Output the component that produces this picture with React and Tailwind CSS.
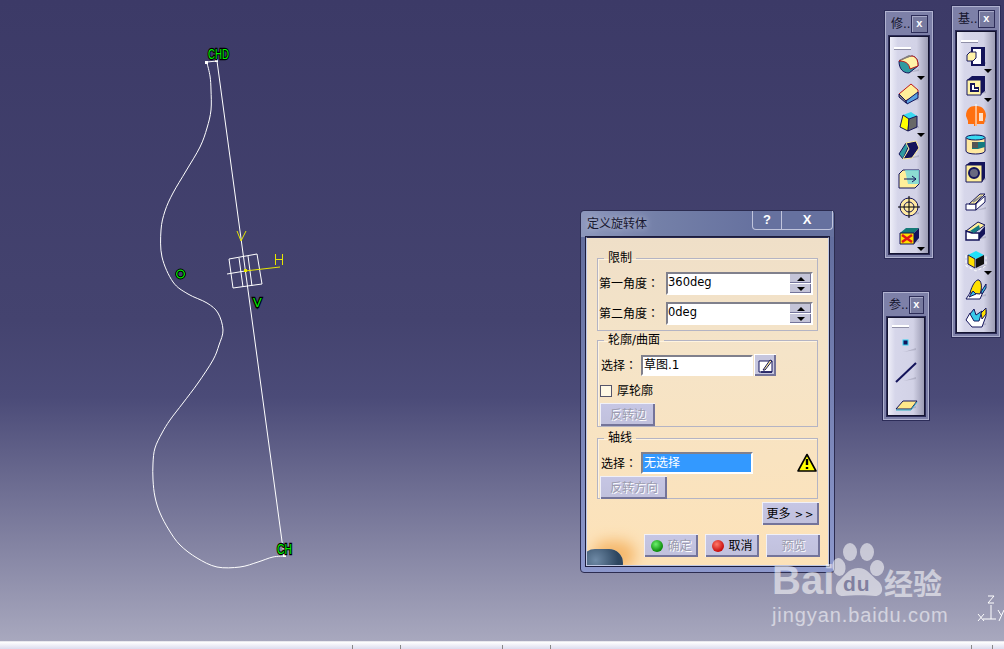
import React from "react";

const CJK = "font-['DejaVu_Sans','Noto_Sans_CJK_SC',sans-serif]";

// sketch profile, read off the picture
const profile = [
  [207, 63], [210, 76], [211, 90], [211, 110], [207, 128], [200, 147], [186, 171], [173, 193], [165, 211],
  [161, 230], [162, 257], [173, 282], [188, 294], [207, 303], [218, 313], [223, 330], [219, 345], [213, 360],
  [198, 383], [183, 403], [170, 420], [162, 433], [155, 448], [153, 463], [153, 480], [155, 497], [160, 513], [169, 530],
  [180, 545], [197, 558], [217, 567], [240, 567], [258, 562], [273, 557], [286, 556],
];

function smooth(pts) {
  let d = `M${pts[0][0]} ${pts[0][1]}`;
  for (let i = 0; i < pts.length - 1; i++) {
    const p0 = pts[i - 1] || pts[i];
    const p1 = pts[i];
    const p2 = pts[i + 1];
    const p3 = pts[i + 2] || p2;
    d += ` C${p1[0] + (p2[0] - p0[0]) / 6} ${p1[1] + (p2[1] - p0[1]) / 6} ${p2[0] - (p3[0] - p1[0]) / 6} ${p2[1] - (p3[1] - p1[1]) / 6} ${p2[0]} ${p2[1]}`;
  }
  return d;
}

function Sketch() {
  const tag = { fill: "#00f000", stroke: "#000", strokeWidth: 2.400, paintOrder: "stroke", fontFamily: "Liberation Sans", fontSize: 14 };
  return (
    <svg width="1004" height="641" className="absolute left-0 top-0">
      <g fill="none" stroke="#fff" strokeWidth="1">
        <path d={smooth(profile)} />
        <path d="M207 62L217 61L284 556" />
        <path d="M229 259L257 254L262 284L233 288Z" />
        <path d="M239 258L243 287M248 256L252 286" />
        <path d="M227 274L245 271" />
      </g>
      <rect x="205" y="61" width="3" height="3" fill="#fff" />
      <rect x="215" y="59" width="3" height="3" fill="#fff" />
      <rect x="283" y="554" width="3" height="3" fill="#fff" />
      <g stroke="#e6e600" fill="none" strokeWidth="1">
        <path d="M245 271L280 267M237 231L241 241L246 231" />
        <path d="M275.500 254V265M282.500 254V265M275 259.500H283" />
      </g>
      <rect x="244" y="269" width="3" height="3" fill="#e6e600" />
      <circle cx="180.500" cy="274" r="3.800" fill="none" stroke="#000" strokeWidth="3.200" />
      <circle cx="180.500" cy="274" r="3.800" fill="none" stroke="#00e800" strokeWidth="1.300" />
      <text x="208" y="59" textLength="21" lengthAdjust="spacingAndGlyphs" style={tag}>CHD</text>
      <text x="253" y="307" style={{ ...tag, fontSize: 13 }}>V</text>
      <text x="277" y="553.500" textLength="15" lengthAdjust="spacingAndGlyphs" style={tag}>CH</text>
      <g fill="none" stroke="#fff" strokeWidth="1">
        <path d="M991 605V619H983M991 619H996" />
        <path d="M978 614L984 621M984 614L978 621" />
        <path d="M988 596H994L988 603H994" />
        <path d="M998 610L1001 615M1004 610L999 621" />
      </g>
    </svg>
  );
}

function Watermark() {
  return (
    <div className="absolute left-[772px] top-[542px] h-[90px] w-[190px] text-white/55">
      <svg width="190" height="60" viewBox="0 0 190 60" className="absolute left-0 top-0" fill="currentColor">
        <ellipse cx="67" cy="25" rx="6.500" ry="9" transform="rotate(-10 67 25)" />
        <ellipse cx="78" cy="10" rx="7" ry="9" />
        <ellipse cx="95" cy="10" rx="7" ry="9" />
        <ellipse cx="105" cy="26" rx="7" ry="8" transform="rotate(15 105 26)" />
        <path d="M86 26C76 26 72 35 68 38C62 43 62 54 71 54C80 53 96 53 103 54C112 54 112 44 106 39C99 34 96 26 86 26Z" />
      </svg>
      <span className="absolute left-0 top-[14px] font-['Liberation_Sans',sans-serif] text-[40px] leading-[48px] font-bold">Bai</span>
      <span className="absolute left-[71px] top-[29px] font-['Liberation_Sans',sans-serif] text-[21px] leading-[26px] tracking-[1px] font-bold text-[#8080a0]">du</span>
      <span className="absolute left-[112px] top-[22px] font-['Noto_Sans_CJK_SC',sans-serif] text-[29px] leading-[36px] font-bold">经验</span>
      <span className="absolute left-0 top-[60px] font-['Liberation_Sans',sans-serif] text-[20px] leading-[26px] tracking-[0.9px]">jingyan.baidu.com</span>
    </div>
  );
}

// toolbar icons
const Dots = () => <path d="M9 21L22 19L22 17L13 20Z" fill="#9a9ab0" opacity=".55" />;
const stroke = { stroke: "#14145a", strokeWidth: 1, strokeLinejoin: "round" };

const icons = {
  fillet: (
    <>
      <path d="M2 9L15 4C20 5 21 9 21 14L12 21C6 21 2 17 2 9Z" fill="#2f9aa0" {...stroke} />
      <path d="M2 9L10 5L15 4C20 5 21 9 21 14L13 17C12 11 8 9 2 9Z" fill="#fff3a8" stroke="#c01818" />
      <path d="M2 8L12 3L15 4L5 8Z" fill="#808080" />
    </>
  ),
  chamfer: (
    <>
      <path d="M2 13L8 20L21 14V9L14 3Z" fill="#ffef9a" stroke="#c01818" />
      <path d="M2 13L9 20V22L2 16Z" fill="#808080" {...stroke} />
      <path d="M9 20L21 11V17L10 23Z" fill="#5aa0e0" {...stroke} />
    </>
  ),
  draft: (
    <>
      <path d="M6 6L14 3L20 7L12 10Z" fill="#38d8f0" />
      <path d="M6 6L12 10L11 22L3 18Z" fill="#ffff00" {...stroke} />
      <path d="M12 10L20 7V18L11 22Z" fill="#686868" {...stroke} />
    </>
  ),
  chevron: (
    <>
      <path d="M2 16L9 5L12 7L6 21Z" fill="#2f9aa0" {...stroke} />
      <path d="M9 5L19 3L22 10L15 20L6 21L12 11Z" fill="#14145a" stroke="#ffef9a" />
    </>
  ),
  mesh: (
    <>
      <path d="M2 8L6 4H22V18L18 22H2Z" fill="#ffef9a" {...stroke} />
      <path d="M8 4H22V18H11Z" fill="#70d8e0" opacity=".8" />
      <path d="M7 13H19M15 10L19 13L15 16" fill="none" stroke="#14145a" />
    </>
  ),
  target: (
    <>
      <circle cx="12" cy="12" r="9" fill="#ffe9a0" {...stroke} />
      <circle cx="12" cy="12" r="5" fill="none" {...stroke} />
      <path d="M1 12H23M12 1V23" stroke="#000" />
    </>
  ),
  xbox: (
    <>
      <path d="M3 10L9 5H22L17 10Z" fill="#167a78" />
      <path d="M17 10L22 5V15L17 21Z" fill="#14145a" />
      <rect x="3" y="10" width="14" height="11" fill="#ffe000" {...stroke} />
      <path d="M5 12L15 19M15 12L5 19" stroke="#e01818" strokeWidth="2.500" />
    </>
  ),
  pad: (
    <>
      <path d="M8 3H20V20H8Z" fill="#fff" stroke="#14145a" strokeWidth="2" />
      <path d="M17 3H21V19L17 21Z" fill="#14145a" />
      <path d="M3 10L6 7H12V13L9 16H3Z" fill="#fff3a8" {...stroke} />
    </>
  ),
  pocket: (
    <>
      <path d="M3 6L8 2H21V17L16 21H3Z" fill="#14145a" />
      <rect x="3" y="6" width="14" height="15" fill="#fff3a8" {...stroke} />
      <path d="M6 9H11V13H15V18H6Z" fill="#14145a" />
      <path d="M8 11H10V15H14V16H8Z" fill="#fff" />
    </>
  ),
  shaft: (
    <>
      <path d="M11 3C6 3 2 6 2 13L4 18V21H10V23H13V3ZM13 3C18 3 22 7 22 13L20 21H13Z" fill="#ff7010" />
      <path d="M12 1V23" stroke="#fff" />
      <path d="M15 10H19V18H15Z" fill="#ffe0c8" />
    </>
  ),
  groove: (
    <>
      <path d="M2 6C2 3 21 3 21 6V19C21 23 2 23 2 19Z" fill="#ffe9a0" {...stroke} />
      <ellipse cx="11.500" cy="5.500" rx="9.500" ry="2.500" fill="#38d8f0" {...stroke} />
      <path d="M8 10H21V15L14 17H8Z" fill="#147a80" />
      <path d="M8 10H14V16H8Z" fill="#555" />
    </>
  ),
  hole: (
    <>
      <rect x="2" y="4" width="16" height="17" fill="#ffef9a" {...stroke} />
      <path d="M2 4L6 1H21V17L18 21V4Z" fill="#14145a" />
      <circle cx="10" cy="12" r="5" fill="#686880" stroke="#14145a" strokeWidth="2" />
    </>
  ),
  rib: (
    <>
      <path d="M2 14H12V20H2Z" fill="#fff" {...stroke} />
      <path d="M5 14L16 4H21L11 14Z" fill="#ffef9a" {...stroke} />
      <path d="M12 14L21 6V12L12 20Z" fill="#fff" {...stroke} />
      <path d="M9 12L18 6" stroke="#909098" strokeWidth="2" />
    </>
  ),
  slot: (
    <>
      <path d="M2 12L14 3L21 6L10 14Z" fill="#ffef9a" {...stroke} />
      <path d="M2 12V21H15V14H8Z" fill="#fff" stroke="#14145a" strokeWidth="1.500" />
      <path d="M15 21V14L21 7V15Z" fill="#14145a" />
      <path d="M6 12L15 6L16 10L10 14Z" fill="#147a80" />
    </>
  ),
  solid: (
    <>
      <path d="M4 7L12 3L20 7L12 11Z" fill="#20e0f8" />
      <path d="M4 7L11 11V20L4 16Z" fill="#ffe000" {...stroke} />
      <path d="M12 11L20 7V16L12 20Z" fill="#111" />
      <path d="M2 7V18L12 23L22 18V7" fill="none" stroke="#fff" strokeDasharray="3 2" />
    </>
  ),
  loft: (
    <>
      <path d="M2 22L8 13H20L16 22Z" fill="#fff" {...stroke} />
      <path d="M6 16C8 8 12 2 15 3C18 5 18 12 16 17Z" fill="#ffe000" {...stroke} />
      <path d="M5 20L9 14L12 17ZM17 15L22 7V11L18 17Z" fill="#38c8e8" {...stroke} />
    </>
  ),
  remove: (
    <>
      <path d="M2 14L8 21H18L22 10V4L17 10H10L6 7Z" fill="#fff" {...stroke} />
      <path d="M6 8L10 3L12 9L18 5L15 15H10Z" fill="#38c8e8" {...stroke} />
      <path d="M17 7L22 2V8L18 13Z" fill="#ffe000" {...stroke} />
    </>
  ),
  point: <rect x="9" y="9" width="5" height="5" fill="#14145a" stroke="#30d0f0" />,
  line: <path d="M2 22L22 3" stroke="#14145a" strokeWidth="2" />,
  plane: (
    <>
      <path d="M2 20L9 12H23L17 20Z" fill="#ffe88a" stroke="#14145a" />
      <path d="M2 21H17L23 13" fill="none" stroke="#30b0c0" />
    </>
  ),
};

function ToolIcon({ name, more, h }) {
  return (
    <div className={`relative flex w-full items-center justify-center ${h}`}>
      <svg width="24" height="24" viewBox="0 0 24 24" className="overflow-visible">
        <Dots />
        {icons[name]}
      </svg>
      {more && <div className="absolute bottom-[-1px] right-[3px] h-0 w-0 border-x-[4px] border-t-[4px] border-x-transparent border-t-black" />}
    </div>
  );
}

function CloseBox() {
  return (
    <div className="flex h-[18px] w-[18px] items-center justify-center border border-[#2c2c58] bg-[#777a9f] font-['Liberation_Sans',sans-serif] text-[11px] leading-none font-bold text-white shadow-[inset_1px_1px_0_#a8aac8]">
      x
    </div>
  );
}

function ToolWindow({ title, className, pad, children }) {
  return (
    <div className={`absolute flex flex-col border border-[#2c2c58] bg-[#7d80a8] px-[4px] pb-[4px] shadow-[inset_1px_1px_0_#b0b2d0,inset_-1px_-1px_0_#b0b2d0] ${className}`}>
      <div className="flex h-[25px] shrink-0 items-center justify-between pr-[1px] pl-[2px]">
        <span className={`${CJK} text-[12px] leading-none text-[#14142c]`}>{title}</span>
        <CloseBox />
      </div>
      <div className={`flex min-h-0 flex-1 flex-col border border-[#141430] bg-[linear-gradient(90deg,#eeeef8_0%,#d6d6ea_20%,#d2d2e6_70%,#9c9cb4_100%)] shadow-[0_0_0_1px_#2c2c58] ${pad}`}>
        <div className="mb-px ml-[4px] h-[2px] w-[17px] shrink-0 bg-white shadow-[0_1px_0_#9090a8]" />
        {children}
      </div>
    </div>
  );
}

const Btn = ({ children, off, className = "" }) => (
  <div
    className={`flex h-[23px] shrink-0 items-center justify-center gap-[4px] border-t border-l border-[#f0f0f8] bg-[linear-gradient(180deg,#c6c6e4,#c0c0dc)] text-[12px] shadow-[inset_-2px_-2px_0_#74749a] ${off ? "text-[#9c9cae] [text-shadow:1px_1px_0_#fff]" : "text-black"} ${className}`}
  >
    {children}
  </div>
);

const Field = ({ children, className = "", blue }) => (
  <div
    className={`flex items-center border-2 border-t-[#80808c] border-r-white border-b-white border-l-[#80808c] pl-[1px] text-[12px] ${blue ? "bg-[#3399ff] text-white" : "bg-white text-black"} ${className}`}
  >
    {children}
  </div>
);

function Spin({ value }) {
  return (
    <div className="flex h-[23px] w-[147px] border-2 border-t-[#80808c] border-r-white border-b-white border-l-[#80808c] bg-white text-[11.500px] leading-[17px]">
      <span className="flex-1 text-black">{value}</span>
      <div className="flex w-[21px] flex-col gap-px">
        <div className="flex flex-1 items-center justify-center bg-[#c4c4d8] shadow-[inset_-1px_-1px_0_#74749a]">
          <div className="h-0 w-0 border-x-[4px] border-b-[4px] border-x-transparent border-b-black" />
        </div>
        <div className="flex flex-1 items-center justify-center bg-[#c4c4d8] shadow-[inset_-1px_-1px_0_#74749a]">
          <div className="h-0 w-0 border-x-[4px] border-t-[4px] border-x-transparent border-t-black" />
        </div>
      </div>
    </div>
  );
}

function Group({ title, className, children }) {
  return (
    <fieldset className={`mx-[10px] block border border-[#b4b4c4] shadow-[inset_1px_1px_0_#fff4e0] ${className}`}>
      <legend className="ml-[6px] px-[4px] text-[12px] leading-[14px] text-black">{title}</legend>
      {children}
    </fieldset>
  );
}

const Label = ({ w, text }) => (
  <span className={`${w} text-[12px] leading-[14px]`}>
    {text}
    <span className="font-['Noto_Sans_CJK_TC',sans-serif]">：</span>
  </span>
);

function Dialog() {
  return (
    <div className={`absolute left-[580px] top-[210px] flex h-[363px] w-[255px] flex-col rounded-[4px] border border-[#2c2c50] bg-[linear-gradient(180deg,#5f6a9a,#8d98cc)] ${CJK}`}>
      <div className="flex h-[26px] shrink-0 items-start justify-between rounded-t-[4px] bg-[linear-gradient(90deg,#8d97bc_0%,#7480a8_30%,#66719f_70%)]">
        <span className="mt-[6px] ml-[6px] text-[12px] leading-[14px] text-[#181830] [text-shadow:0_0_6px_#c8cce0]">定义旋转体</span>
        <div className="mr-px flex h-[19px] w-[81px] rounded-b-[4px] border-x border-b border-[#c0c4dc] font-['Liberation_Sans',sans-serif] text-[13px] font-bold text-white">
          <span className="flex w-[29px] items-center justify-center border-r border-[#c0c4dc]">?</span>
          <span className="flex flex-1 items-center justify-center">X</span>
        </div>
      </div>
      <div className="relative mx-[5px] flex h-[329px] flex-col overflow-hidden border border-[#c0c8e4] border-t-[#28284c] bg-[linear-gradient(180deg,#efdfc8_0%,#f5e4c8_35%,#fde2b8_100%)] outline-1 outline-[#1c1c3c]">
        <Group title="限制" className="mt-[13px] h-[80px] pt-[7px]">
          <div className="flex items-center pl-[1px]">
            <Label w="w-[67px]" text="第一角度" />
            <Spin value="360deg" />
          </div>
          <div className="mt-[7px] flex items-center pl-[1px]">
            <Label w="w-[67px]" text="第二角度" />
            <Spin value="0deg" />
          </div>
        </Group>
        <Group title="轮廓/曲面" className="mt-[2px] h-[94px] pt-[7px]">
          <div className="flex items-center pl-[3px]">
            <Label w="w-[40px]" text="选择" />
            <Field className="h-[21px] w-[112px]">草图.1</Field>
            <div className="ml-px flex h-[22px] w-[22px] items-center justify-center border-t border-l border-white bg-[#c6c6de] shadow-[inset_-2px_-2px_0_#74749a]">
              <svg width="16" height="16" viewBox="0 0 16 16" fill="none">
                <path d="M1 3H14V14H1Z" fill="#fff" stroke="#14145a" />
                <path d="M5 12L12 2L14 3L7 12Z" fill="#ffef9a" stroke="#14145a" />
                <path d="M3 14H14" stroke="#14145a" strokeWidth="1.500" />
              </svg>
            </div>
          </div>
          <div className="mt-[8px] flex items-center pl-[2px]">
            <div className="h-[12px] w-[12px] border border-[#55556a] bg-[#fff8e4]" />
            <span className="ml-[5px] text-[12px] leading-[14px]">厚轮廓</span>
          </div>
          <Btn off className="mt-[5px] ml-[2px] w-[55px]">反转边</Btn>
        </Group>
        <Group title="轴线" className="mt-[4px] h-[68px] pt-[7px]">
          <div className="flex items-center pl-[3px]">
            <Label w="w-[40px]" text="选择" />
            <Field blue className="h-[22px] w-[112px]">无选择</Field>
            <svg width="20" height="20" viewBox="0 0 20 20" className="ml-[44px]">
              <path d="M10 1.500L19 18H1Z" fill="#ffff00" stroke="#000" strokeWidth="1.600" strokeLinejoin="round" />
              <path d="M10 6V12M10 14V16" stroke="#000" strokeWidth="2.400" />
            </svg>
          </div>
          <Btn off className="mt-[2px] ml-[2px] w-[67px]">反转方向</Btn>
        </Group>
        <div className="mt-[3px] flex justify-end pr-[9px]">
          <Btn className="w-[57px]">
            更多<span className="text-[10px] tracking-[2px]">&gt;&gt;</span>
          </Btn>
        </div>
        <div className="mt-[9px] flex justify-end gap-[7px] pr-[8px]">
          <Btn off className="w-[54px]">
            <span className="h-[12px] w-[12px] rounded-full bg-[radial-gradient(circle_at_40%_35%,#6cf06c,#0a8a0a_70%)]" />
            确定
          </Btn>
          <Btn className="w-[54px]">
            <span className="h-[12px] w-[12px] rounded-full bg-[radial-gradient(circle_at_40%_35%,#ff7a6a,#c80c0c_70%)]" />
            取消
          </Btn>
          <Btn off className="w-[54px]">预览</Btn>
        </div>
        {/* globe in the corner of the panel */}
        <div className="absolute bottom-[-12px] left-[-6px] h-[28px] w-[42px] rounded-full bg-[radial-gradient(circle_at_35%_40%,#6f8aa6,#2d4660_70%)] shadow-[12px_-8px_14px_#f5b86c]" />
      </div>
    </div>
  );
}

export default function App() {
  return (
    <div className="flex h-[649px] w-[1004px] flex-col overflow-hidden">
      <div className="relative flex-1 bg-[linear-gradient(180deg,#3c3a67_0%,#44436f_50%,#4b4b78_62%,#a8a8be_100%)]">
        <Sketch />
        <Dialog />
        <Watermark />
        <ToolWindow title="修.." className="left-[884px] top-[10px] h-[249px] w-[50px]" pad="pt-[10px]">
          {[["fillet", 1], ["chamfer"], ["draft", 1], ["chevron"], ["mesh"], ["target"], ["xbox", 1]].map(([n, m]) => (
            <ToolIcon key={n} name={n} more={m} h="h-[28.500px]" />
          ))}
        </ToolWindow>
        <ToolWindow title="基.." className="left-[951px] top-[5px] h-[333px] w-[50px]" pad="pt-[8px]">
          {[["pad", 1], ["pocket", 1], ["shaft"], ["groove"], ["hole"], ["rib"], ["slot"], ["solid", 1], ["loft"], ["remove"]].map(([n, m]) => (
            <ToolIcon key={n} name={n} more={m} h="h-[29px]" />
          ))}
        </ToolWindow>
        <ToolWindow title="参.." className="left-[882px] top-[291px] h-[130px] w-[48px]" pad="pt-[7px]">
          {["point", "line", "plane"].map((n) => (
            <ToolIcon key={n} name={n} h="h-[29px]" />
          ))}
        </ToolWindow>
      </div>
      <div className="flex h-[8px] shrink-0 items-end border-t border-[#e8e8ee] bg-[linear-gradient(180deg,#ffffff,#dcdcee)]">
        <div className="h-[4px] w-[353px] border-r border-[#888]" />
        <div className="h-[4px] w-[48px] border-r border-[#888]" />
        <div className="h-[4px] w-[102px] border-r border-[#888]" />
        <div className="h-[4px] w-[48px] border-r border-[#888]" />
        <div className="h-[4px] w-[421px] border-r border-[#888]" />
        <div className="h-[4px] w-[21px] border-r border-[#888]" />
      </div>
    </div>
  );
}
